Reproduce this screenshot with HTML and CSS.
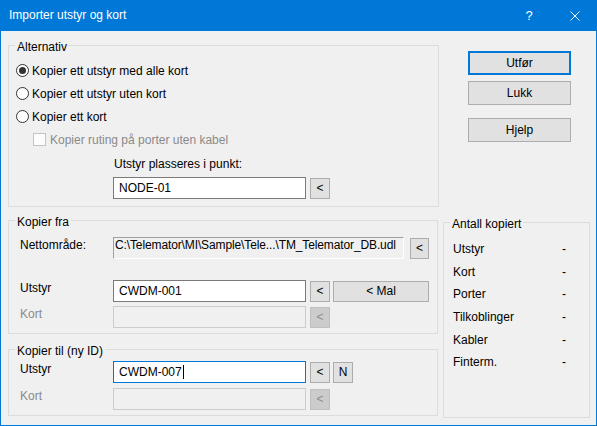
FILE: index.html
```html
<!DOCTYPE html>
<html lang="no">
<head>
<meta charset="utf-8">
<title>Importer utstyr og kort</title>
<link rel="stylesheet" href="styles.css">
</head>
<body>
<div class="window">
  <div class="titlebar">
    <span class="title">Importer utstyr og kort</span>
    <span class="tb-btn tb-help">?</span>
    <span class="tb-btn tb-close"><svg width="10" height="10" viewBox="0 0 10 10"><path d="M0.5 0.5 L9.5 9.5 M9.5 0.5 L0.5 9.5" stroke="#fff" stroke-width="1" fill="none"/></svg></span>
  </div>
  <div class="dialog-body">
    <div class="left">
      <section class="group g-alt">
        <div class="legend">Alternativ</div>
        <div class="group-body alt-body">
          <div class="radio-row"><span class="radio checked"></span><span>Kopier ett utstyr med alle kort</span></div>
          <div class="radio-row"><span class="radio"></span><span>Kopier ett utstyr uten kort</span></div>
          <div class="radio-row"><span class="radio"></span><span>Kopier ett kort</span></div>
          <div class="check-row"><span class="checkbox"></span><span>Kopier ruting på porter uten kabel</span></div>
          <div class="place-label">Utstyr plasseres i punkt:</div>
          <div class="place-row">
            <div class="textbox">NODE-01</div>
            <div class="btn btn-sm">&lt;</div>
          </div>
        </div>
      </section>

      <section class="group g-fra">
        <div class="legend">Kopier fra</div>
        <div class="group-body fra-body">
          <div class="form-row">
            <span class="label">Nettområde:</span>
            <div class="readonly">C:\Telemator\MI\Sample\Tele...\TM_Telemator_DB.udl</div>
            <div class="btn btn-net">&lt;</div>
          </div>
          <div class="form-row row-utstyr">
            <span class="label">Utstyr</span>
            <div class="textbox">CWDM-001</div>
            <div class="btn btn-sm">&lt;</div>
            <div class="btn btn-mal">&lt; Mal</div>
          </div>
          <div class="form-row row-kort">
            <span class="label disabled-text">Kort</span>
            <div class="textbox disabled"></div>
            <div class="btn btn-sm disabled">&lt;</div>
          </div>
        </div>
      </section>

      <section class="group g-til">
        <div class="legend">Kopier til (ny ID)</div>
        <div class="group-body til-body">
          <div class="form-row">
            <span class="label">Utstyr</span>
            <div class="textbox focused">CWDM-007<span class="caret"></span></div>
            <div class="btn btn-sm">&lt;</div>
            <div class="btn btn-n">N</div>
          </div>
          <div class="form-row row-kort2">
            <span class="label disabled-text">Kort</span>
            <div class="textbox disabled"></div>
            <div class="btn btn-sm disabled">&lt;</div>
          </div>
        </div>
      </section>
    </div>

    <div class="right">
      <div class="btn cmd cmd-default">Utfør</div>
      <div class="btn cmd cmd-close">Lukk</div>
      <div class="btn cmd cmd-help">Hjelp</div>

      <section class="group g-antall">
        <div class="legend">Antall kopiert</div>
        <div class="group-body antall-body">
          <span>Utstyr</span><span>-</span>
          <span>Kort</span><span>-</span>
          <span>Porter</span><span>-</span>
          <span>Tilkoblinger</span><span>-</span>
          <span>Kabler</span><span>-</span>
          <span>Finterm.</span><span>-</span>
        </div>
      </section>
    </div>
  </div>
</div>
</body>
</html>
```
FILE: styles.css
```css
* { box-sizing: border-box; }
html, body { margin: 0; padding: 0; }
body {
  font-family: "Liberation Sans", Arial, sans-serif;
  font-size: 12px;
  color: #000;
  background: #f0f0f0;
}
.window {
  width: 597px;
  height: 426px;
  border: 1px solid #0078d7;
  border-top: 0;
  background: #f0f0f0;
  overflow: hidden;
}
.titlebar {
  height: 31px;
  margin: 0 -1px;
  background: #0078d7;
  color: #fff;
  display: flex;
  align-items: center;
}
.title {
  flex: 1;
  padding-left: 9px;
  line-height: 31px;
  font-size: 12px;
}
.tb-btn {
  height: 31px;
  display: flex;
  align-items: center;
  justify-content: center;
}
.tb-help { width: 46px; font-size: 13px; }
.tb-close { width: 45px; }

.dialog-body {
  display: flex;
  padding-left: 7px;
}
.left {
  width: 431px;
  display: flex;
  flex-direction: column;
}
.group {
  border: 1px solid #dcdcdc;
}
.legend {
  width: max-content;
  height: 16px;
  line-height: 16px;
  margin: -7px 0 0 6px;
  padding: 0 2px;
  background: #f0f0f0;
}

/* Alternativ */
.g-alt { margin-top: 14px; }
.alt-body { padding: 4px 0 7px 7px; }
.radio-row, .check-row {
  height: 23px;
  display: flex;
  align-items: center;
}
.radio {
  flex: none;
  width: 13px;
  height: 13px;
  border: 1px solid #333;
  border-radius: 50%;
  background: #fff;
  margin-right: 3px;
  display: flex;
  align-items: center;
  justify-content: center;
}
.radio.checked::after {
  content: "";
  width: 7px;
  height: 7px;
  border-radius: 50%;
  background: #333;
}
.check-row {
  padding-left: 17px;
  color: #8a8a8a;
}
.checkbox {
  flex: none;
  width: 13px;
  height: 13px;
  border: 1px solid #c4c4c4;
  background: #fcfcfc;
  margin-right: 4px;
}
.place-label {
  margin: 5px 0 0 98px;
  line-height: 16px;
}
.place-row {
  display: flex;
  align-items: center;
  margin: 5px 0 0 97px;
}

/* fields */
.textbox {
  flex: none;
  width: 193px;
  height: 22px;
  border: 1px solid #7a7a7a;
  background: #fff;
  padding-left: 5px;
  line-height: 20px;
  white-space: nowrap;
}
.textbox.focused { border-color: #0078d7; }
.textbox.disabled { background: #f0f0f0; border-color: #cccccc; }
.caret {
  display: inline-block;
  width: 1px;
  height: 14px;
  background: #000;
  vertical-align: middle;
  margin-left: 1px;
  margin-top: -2px;
}
.btn {
  flex: none;
  background: #e1e1e1;
  border: 1px solid #adadad;
  display: flex;
  align-items: center;
  justify-content: center;
  white-space: nowrap;
}
.btn.disabled {
  background: #cccccc;
  border-color: #bfbfbf;
  color: #8c8c8c;
}
.btn-sm { width: 20px; height: 21px; margin-left: 4px; }
.btn-mal { width: 96px; height: 21px; margin-left: 3px; }
.btn-n { width: 20px; height: 21px; margin-left: 3px; }
.btn-net { width: 19px; height: 21px; margin-left: 6px; }

/* Kopier fra / til */
.g-fra { margin-top: 13px; width: 430px; }
.fra-body { padding: 7px 0 5px 11px; }
.g-til { margin-top: 15px; width: 430px; }
.til-body { padding: 2px 0 5px 11px; }
.form-row {
  display: flex;
  align-items: center;
}
.label {
  flex: none;
  width: 93px;
  line-height: 16px;
  align-self: flex-start;
}
.disabled-text { color: #8a8a8a; }
.row-utstyr { margin-top: 21px; }
.row-kort { margin-top: 4px; }
.row-kort2 { margin-top: 5px; }
.readonly {
  flex: none;
  width: 291px;
  height: 22px;
  border-top: 1px solid #a0a0a0;
  border-left: 1px solid #a0a0a0;
  border-right: 1px solid #ffffff;
  border-bottom: 1px solid #ffffff;
  background: #f0f0f0;
  padding-left: 1px;
  line-height: 15px;
  letter-spacing: -0.12px;
  white-space: nowrap;
  overflow: hidden;
}

/* right column */
.right {
  margin-left: 4px;
  width: 147px;
  display: flex;
  flex-direction: column;
}
.cmd {
  width: 103px;
  height: 24px;
  margin-left: 25px;
}
.cmd-default { margin-top: 20px; border: 2px solid #0078d7; }
.cmd-close { margin-top: 6px; }
.cmd-help { margin-top: 13px; }
.g-antall {
  margin-top: 80px;
  height: 196px;
}
.antall-body {
  padding: 6px 0 0 9px;
  display: grid;
  grid-template-columns: 109px auto;
  grid-auto-rows: 22.6px;
  align-items: center;
}
```
